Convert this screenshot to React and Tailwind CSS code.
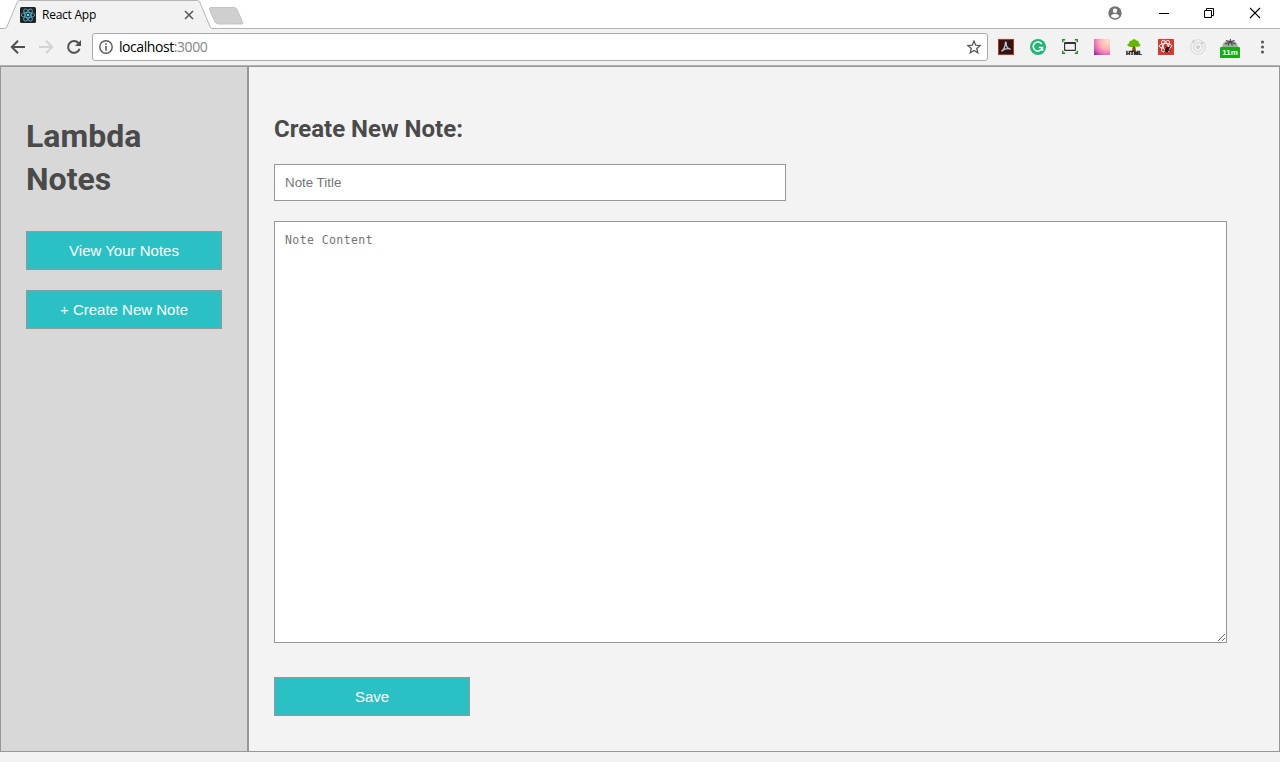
import React from "react";

const svg = "block shrink-0";

function ReactIcon() {
  return (
    <svg className={svg} width="16" height="16" viewBox="0 0 16 16">
      <rect width="16" height="16" rx="1.5" fill="#222" />
      <g fill="none" stroke="#51a9c4" strokeWidth="0.9">
        <ellipse cx="8" cy="8" rx="6.8" ry="2.6" />
        <ellipse cx="8" cy="8" rx="6.8" ry="2.6" transform="rotate(60 8 8)" />
        <ellipse cx="8" cy="8" rx="6.8" ry="2.6" transform="rotate(120 8 8)" />
      </g>
      <circle cx="8" cy="8" r="1.3" fill="#61dafb" />
    </svg>
  );
}

function TabStrip() {
  return (
    <div className="relative flex h-[29px] items-start bg-white">
      <svg className="absolute left-0 top-0 block" width="1280" height="29" viewBox="0 0 1280 29">
        <path d="M6.500 29L18 2Q18.500 1 19.500 1H197.500Q198.500 1 199 2L210.800 29Z" fill="#f2f2f2" />
        <path d="M0 28.500H5Q6.200 28.500 6.800 27L17.300 2Q18 .5 19.500 .5H197.500Q199 .5 199.700 2L210.200 27Q210.800 28.500 212 28.500H1280" fill="none" stroke="#b4b4b4" />
        <path d="M211 7.500H234Q236 7.500 237 9.500L242.500 22Q243.500 24 241.500 24H218.500Q216 24 215 22L209.500 9.500Q208.800 7.500 211 7.500Z" fill="#cfcfcf" stroke="#c2c2c2" />
      </svg>
      <div className="relative ml-5 flex h-[29px] w-[176px] items-center">
        <ReactIcon />
        <span className="ml-[6px] font-['Open_Sans',sans-serif] text-[12px] leading-4 tracking-[-0.25px] text-black">React App</span>
        <svg className="ml-auto mr-[2px] block" width="10" height="10" viewBox="0 0 10 10">
          <path d="M1 1L9 9M9 1L1 9" stroke="#5a5a5a" strokeWidth="1.600" />
        </svg>
      </div>
      <div className="relative ml-auto flex h-[26px] items-center">
        <svg className="mr-[36px] block" width="14" height="14" viewBox="0 0 14 14">
          <circle cx="7" cy="7" r="6.700" fill="#737373" />
          <circle cx="7" cy="4.700" r="2.200" fill="#fff" />
          <path d="M2.800 10.200C3 8.500 5.500 8 7 8s4 .5 4.200 2.200Q9.500 12.200 7 12.200T2.800 10.200Z" fill="#fff" />
        </svg>
        <svg className="block" width="122" height="12" viewBox="0 0 122 12" fill="none" stroke="#000">
          <path d="M1 6.500H11" />
          <path d="M46.500 3.500H53.500V10.500H46.500ZM48.500 3.500V1.500H55.500V8.500H53.500" />
          <path d="M92 1L102 11M102 1L92 11" strokeWidth="1.100" />
        </svg>
      </div>
    </div>
  );
}

function Extensions() {
  return (
    <div className="flex items-center gap-4">
      <svg className={svg} width="16" height="16" viewBox="0 0 16 16">
        <rect x=".5" y=".5" width="15" height="15" fill="#2a1719" stroke="#d42a12" />
        <path d="M3.300 12.300C5 11.500 7.500 7.500 7.300 4.200C7.200 2.700 8.400 2.700 8.200 4.200C8 7 10 9.500 12.700 10.300M4 12C6 10 9 9.300 12.500 10" fill="none" stroke="#cfc6c6" strokeWidth="1.200" />
      </svg>
      <svg className={svg} width="16" height="16" viewBox="0 0 16 16">
        <circle cx="8" cy="8" r="8" fill="#20b675" />
        <path d="M11.800 5.200A4.600 4.600 0 1 0 12.200 9M8.800 8.500H12.500V12" fill="none" stroke="#fff" strokeWidth="1.600" />
      </svg>
      <svg className={svg} width="16" height="16" viewBox="0 0 16 16" fill="none">
        <rect x="2.600" y="3.800" width="10.800" height="7.600" rx=".5" stroke="#333" strokeWidth="1.200" />
        <path d="M2.500 4H13.500" stroke="#333" strokeWidth="2" />
        <path d="M.7 3.200V.7H3.200M12.800.7H15.300V3.200M.7 11.800V14.300H3.200M12.800 14.300H15.300V11.800" stroke="#2f8730" strokeWidth="1.400" />
      </svg>
      <div className="size-4 bg-[radial-gradient(circle_at_85%_15%,#ffdfc8_0%,#ffafb7_42%,#e770b8_68%,#8d179f_100%)]" />
      <svg className={svg} width="16" height="16" viewBox="0 0 16 16">
        <path d="M7 6H9L10 12H6Z" fill="#885014" />
        <path d="M2 7C.5 6 1.500 4.500 3 4.400C3 2 5 1.600 5.500 1.800C6.500-.3 9.500-.2 10.300 1.600C12.600 1.300 13.100 3.400 12.700 4.200C15 4.600 15 7.500 12.600 7.600C11 8.500 9.500 7.500 8.500 7C7 8.500 4 8.500 2 7Z" fill="#62b900" />
        <text x="8" y="15.600" textAnchor="middle" textLength="16" lengthAdjust="spacingAndGlyphs" className="font-['Liberation_Sans',sans-serif] text-[5.500px] font-bold" fill="#111" stroke="#111" strokeWidth=".4">HTML</text>
      </svg>
      <svg className={svg} width="16" height="16" viewBox="0 0 16 16">
        <rect width="16" height="16" rx=".5" fill="#d73a31" />
        <g fill="none" stroke="#fff" strokeWidth=".9">
          <ellipse cx="7.500" cy="7" rx="6.300" ry="2.500" />
          <ellipse cx="7.500" cy="7" rx="6.300" ry="2.500" transform="rotate(60 7.500 7)" />
          <ellipse cx="7.500" cy="7" rx="6.300" ry="2.500" transform="rotate(120 7.500 7)" />
        </g>
        <ellipse cx="9.200" cy="10.500" rx="1.900" ry="3" fill="#351515" transform="rotate(30 9.200 10.500)" />
        <path d="M6 9L13 12M6.500 13L12 8M8 7L10 14" stroke="#351515" strokeWidth=".8" />
      </svg>
      <svg className={svg} width="16" height="16" viewBox="0 0 16 16" fill="none" stroke="#d5d5d5">
        <circle cx="8" cy="8" r="7.300" />
        <circle cx="8" cy="8" r="4.400" />
        <circle cx="8" cy="8" r="1.600" fill="#d0d0d0" />
        <circle cx="3.500" cy="2.500" r="1.100" fill="#c5c5c5" />
        <circle cx="12" cy="4" r="1" fill="#c5c5c5" />
      </svg>
      <div className="relative -ml-[2px] h-[22px] w-5">
        <svg className="block" width="20" height="13" viewBox="0 0 20 13">
          <path d="M2 12C2 7 5 4.500 10 4.500s8 2.500 8 7.500Z" fill="#a8a8a8" />
          <path d="M10 6L10.500 3M10 6L6 4.500M10 6L14.500 4.500M10 6L5 8M10 6L15.500 8M9.500 6L8 9.500M10.500 6L12.500 9.500" stroke="#484848" strokeWidth="1.100" fill="none" />
        </svg>
        <div className="absolute left-0 top-[11px] h-[11px] w-5 rounded-[1px] bg-[#17ac17] text-center font-['Liberation_Sans',sans-serif] text-[8px] font-bold leading-[12px] text-white">11m</div>
      </div>
    </div>
  );
}

function Toolbar() {
  return (
    <div className="flex h-[37px] items-center border-b border-[#b1b1b1] bg-[#f2f2f2] pl-[10px]">
      <svg className={svg} width="16" height="16" viewBox="0 0 16 16" fill="none" stroke="#505050" strokeWidth="2">
        <path d="M15 8H2.500M8 1.800L1.800 8L8 14.200" />
      </svg>
      <svg className="ml-3 block" width="16" height="16" viewBox="0 0 16 16" fill="none" stroke="#d3d3d3" strokeWidth="2">
        <path d="M1 8H13.500M8 1.800L14.200 8L8 14.200" />
      </svg>
      <svg className="ml-3 block" width="16" height="16" viewBox="0 0 16 16">
        <path d="M12.400 4A5.900 5.900 0 1 0 13.600 9.800" fill="none" stroke="#505050" strokeWidth="2" />
        <path d="M15 1V7H9Z" fill="#505050" />
      </svg>
      <div className="ml-[10px] flex h-7 w-[896px] items-center rounded-[3px] border border-[#a9a9a9] bg-white pl-[6px] pr-[6px]">
        <svg className={svg} width="14" height="14" viewBox="0 0 14 14">
          <circle cx="7" cy="7" r="6.200" fill="none" stroke="#5a5a5a" strokeWidth="1.400" />
          <path d="M7 3.200V4.800M7 6V10.700" stroke="#5a5a5a" strokeWidth="1.600" />
        </svg>
        <span className="ml-[6px] font-['Open_Sans',sans-serif] text-[14px] leading-5 tracking-[-0.43px] text-black">localhost<span className="text-[#858585]">:3000</span></span>
        <svg className="ml-auto block" width="14" height="14" viewBox="0 0 14 14">
          <path d="M7 1L8.700 5.200L13.200 5.500L9.700 8.400L10.800 12.800L7 10.400L3.200 12.800L4.300 8.400L.8 5.500L5.300 5.200Z" fill="none" stroke="#5a5a5a" strokeWidth="1.300" />
        </svg>
      </div>
      <div className="ml-[10px]"><Extensions /></div>
      <svg className="ml-[20px] block" width="5" height="14" viewBox="0 0 5 14" fill="#5a5a5a">
        <circle cx="2.500" cy="2" r="1.600" /><circle cx="2.500" cy="7" r="1.600" /><circle cx="2.500" cy="12" r="1.600" />
      </svg>
    </div>
  );
}

function Button({ children }) {
  return (
    <button className="block h-[39px] w-[196px] border border-[#979797] bg-[#2bc1c4] text-center font-['Liberation_Sans',sans-serif] text-[15px] leading-[37px] text-white">
      {children}
    </button>
  );
}

export default function App() {
  return (
    <div className="flex h-[762px] w-[1280px] flex-col overflow-hidden bg-[#f3f3f3]">
      <TabStrip />
      <Toolbar />
      <div className="flex h-[686px] border border-[#979797]">
        <aside className="w-[247px] shrink-0 border-r border-[#979797] bg-[#d8d8d8] pl-[25px] pt-[48px]">
          <h1 className="w-[196px] font-['Roboto',sans-serif] text-[32px] font-bold leading-[43px] text-[#4a4a4a]">Lambda Notes</h1>
          <div className="mt-[30px] flex flex-col gap-5">
            <Button>View Your Notes</Button>
            <Button>+ Create New Note</Button>
          </div>
        </aside>
        <main className="flex-1 border-l border-[#979797] pl-[25px] pt-[46px]">
          <h2 className="font-['Roboto',sans-serif] text-[24px] font-bold leading-8 text-[#4a4a4a]">Create New Note:</h2>
          <input placeholder="Note Title" className="mt-[19px] block h-[37px] w-[512px] border border-[#979797] bg-white px-[10px] font-['Liberation_Sans',sans-serif] text-[13.333px] placeholder:text-[#757575]" />
          <textarea placeholder="Note Content" className="mt-5 block h-[422px] w-[953px] border border-[#979797] bg-white p-[10px] font-['DejaVu_Sans_Mono',monospace] text-[11.5px] leading-[17px] tracking-[0.41px] placeholder:text-[#757575]" />
          <div className="mt-[34px]"><Button>Save</Button></div>
        </main>
      </div>
    </div>
  );
}
